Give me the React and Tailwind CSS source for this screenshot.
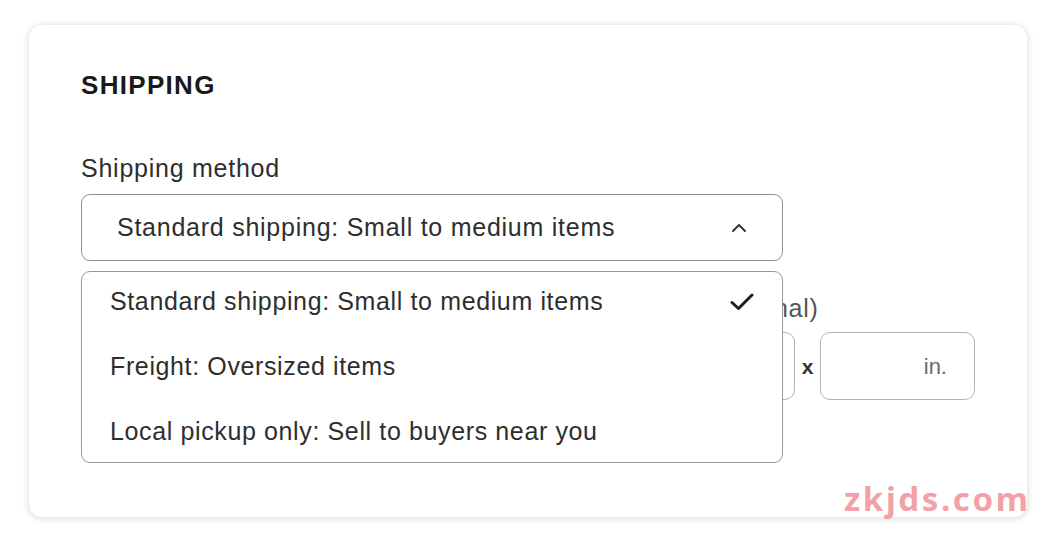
import React from 'react'

const options = [
  { label: 'Standard shipping: Small to medium items', selected: true },
  { label: 'Freight: Oversized items' },
  { label: 'Local pickup only: Sell to buyers near you' },
]

function ChevronUp() {
  return (
    <svg width="16" height="10" viewBox="0 0 16 10" fill="none" stroke="#333" strokeWidth="2" strokeLinecap="round" strokeLinejoin="round">
      <path d="M2 8 L8 2 L14 8" />
    </svg>
  )
}

function Check() {
  return (
    <svg width="24" height="18" viewBox="0 0 24 18" fill="none" stroke="#1f1f1f" strokeWidth="3" strokeLinecap="round" strokeLinejoin="round">
      <path d="M2 9.5 L8.5 15.5 L22 2" />
    </svg>
  )
}

function DimInput() {
  return (
    <div className="w-[155px] h-[68px] rounded-[10px] border border-[#b3b3b3] bg-white flex items-center justify-end pr-[27px] text-[22px] text-[#6b6b6b]">
      in.
    </div>
  )
}

export default function App() {
  return (
    <div className="relative w-[1048px] h-[539px] bg-white overflow-hidden font-['Liberation_Sans',Arial,sans-serif] text-[#2a2a2a]">
      <div className="pt-[24px] pl-[28px]">
        {/* card */}
        <div className="w-[1000px] h-[494px] rounded-[14px] bg-white border border-[#ececec] shadow-[0_1px_6px_rgba(0,0,0,0.14)] pl-[52px] pt-[47px]">
          <h2 className="text-[26px] leading-none font-bold tracking-[0.05em] text-[#1a1a1a]">SHIPPING</h2>

          <p className="mt-[58px] text-[25px] leading-none tracking-[0.03em] text-[#2e2e2e]">Shipping method</p>

          <div className="relative mt-[13px] w-[702px]">
            <div className="h-[67px] rounded-[9px] border border-[#8f8f8f] bg-white flex items-center justify-between pl-[35px] pr-[35px]">
              <span className="text-[25px] tracking-[0.03em] text-[#2e2e2e]">Standard shipping: Small to medium items</span>
              <ChevronUp />
            </div>

            {/* open list */}
            <div className="absolute left-0 top-[77px] z-10 w-[702px] h-[192px] overflow-hidden rounded-[9px] border border-[#9a9a9a] bg-white">
              {options.map((o, i) => (
                <div key={i} className="h-[65px] flex items-center justify-between pl-[28px] pr-[28px] first:-mt-[3px]">
                  <span className="text-[25px] tracking-[0.025em] text-[#2e2e2e]">{o.label}</span>
                  {o.selected && <Check />}
                </div>
              ))}
            </div>
          </div>

          {/* package dimensions, mostly under the list */}
          <div className="mt-[35px] ml-[379px]">
            <p className="-ml-[5px] text-[25px] leading-none tracking-[0.03em] text-[#555]">Package dimensions (optional)</p>
            <div className="mt-[11px] flex items-center">
              <DimInput />
              <span className="w-[25px] pt-[2px] text-center text-[21px] font-bold text-[#333]">x</span>
              <DimInput />
              <span className="w-[25px] pt-[2px] text-center text-[21px] font-bold text-[#333]">x</span>
              <DimInput />
            </div>
          </div>
        </div>
      </div>

      {/* watermark */}
      <div className="absolute left-[844px] top-[482px] text-[33px] leading-none font-bold tracking-[2.6px] text-[#f3a0a6] font-['Noto_Sans',sans-serif]">
        zkjds.com
      </div>
    </div>
  )
}
